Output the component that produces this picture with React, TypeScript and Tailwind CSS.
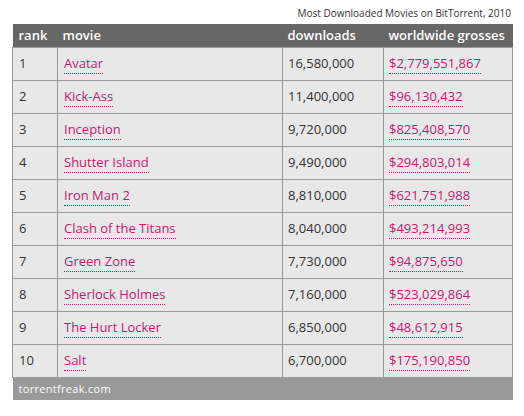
const rows: [string, string, string, string][] = [
  ["1", "Avatar", "16,580,000", "$2,779,551,867"],
  ["2", "Kick-Ass", "11,400,000", "$96,130,432"],
  ["3", "Inception", "9,720,000", "$825,408,570"],
  ["4", "Shutter Island", "9,490,000", "$294,803,014"],
  ["5", "Iron Man 2", "8,810,000", "$621,751,988"],
  ["6", "Clash of the Titans", "8,040,000", "$493,214,993"],
  ["7", "Green Zone", "7,730,000", "$94,875,650"],
  ["8", "Sherlock Holmes", "7,160,000", "$523,029,864"],
  ["9", "The Hurt Locker", "6,850,000", "$48,612,915"],
  ["10", "Salt", "6,700,000", "$175,190,850"],
];

function Link({ children }: { children: string }) {
  return (
    <span className="text-[#c8176f] border-b border-dotted border-[#c8176f] leading-[16px] pb-[1px]">
      {children}
    </span>
  );
}

export default function App() {
  return (
    <div
      className="w-[524px] h-[416px] bg-white pt-[6px]"
      style={{ fontFamily: '"Open Sans", "DejaVu Sans", sans-serif' }}
    >
      <div className="w-[500px] ml-[12px]">
        <div className="h-[18px] text-right text-[10px] text-[#333] leading-[14px] pr-[1px]">
          Most Downloaded Movies on BitTorrent, 2010
        </div>
        <table className="w-[500px] border-collapse table-fixed">
          <colgroup>
            <col className="w-[45px]" />
            <col className="w-[225px]" />
            <col className="w-[101px]" />
            <col className="w-[129px]" />
          </colgroup>
          <thead>
            <tr className="h-[23px] bg-[#666666] text-white text-[13px] font-semibold">
              <th className="text-left pl-[6px] font-semibold">rank</th>
              <th className="text-left pl-[5px] font-semibold">movie</th>
              <th className="text-left pl-[5px] font-semibold">downloads</th>
              <th className="text-left pl-[5px] font-semibold">worldwide grosses</th>
            </tr>
          </thead>
          <tbody className="text-[13px] text-[#333]">
            {rows.map((r) => (
              <tr key={r[0]} className="h-[33px] bg-[#e8e8e8]">
                <td className="border border-[#999] pl-[6px] pt-[1px]">{r[0]}</td>
                <td className="border border-[#999] pl-[6px] pt-[1px]">
                  <Link>{r[1]}</Link>
                </td>
                <td className="border border-[#999] pl-[5px] pt-[1px]">{r[2]}</td>
                <td className="border border-[#999] pl-[5px] pt-[1px]">
                  <Link>{r[3]}</Link>
                </td>
              </tr>
            ))}
          </tbody>
          <tfoot>
            <tr className="h-[23px] bg-[#999999]">
              <td colSpan={4} className="pl-[6px] text-[11px] text-white tracking-[0.3px]">
                torrentfreak.com
              </td>
            </tr>
          </tfoot>
        </table>
      </div>
    </div>
  );
}
